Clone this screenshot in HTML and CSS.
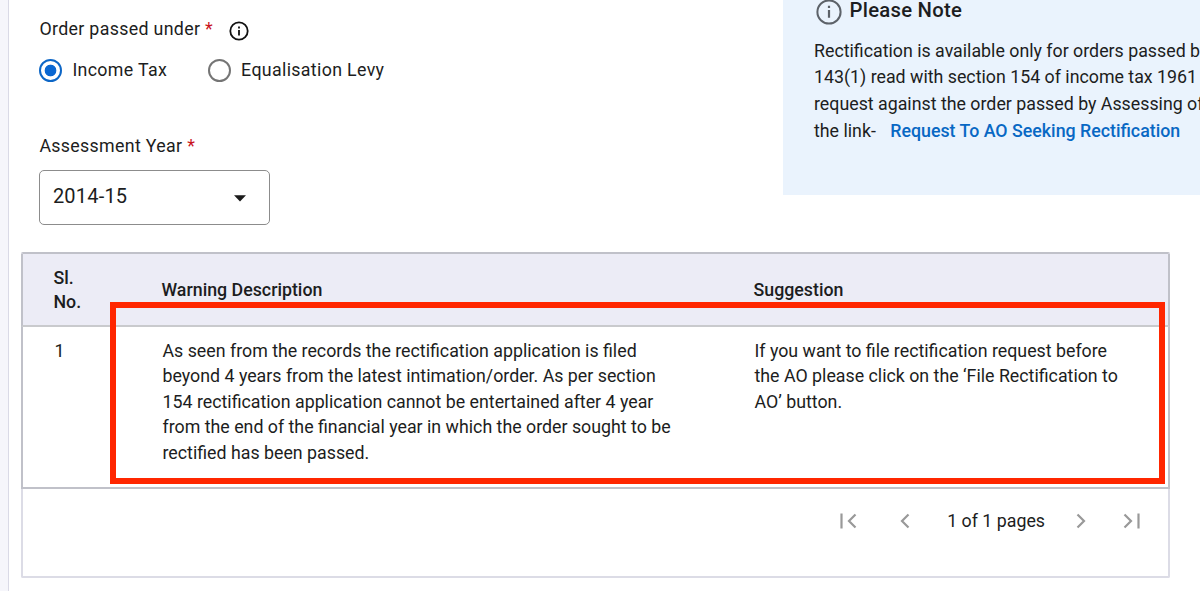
FILE: index.html
```
<!DOCTYPE html>
<html lang="en">
<head>
<meta charset="utf-8">
<title>Rectification request</title>
<link rel="stylesheet" href="styles.css">
</head>
<body>
<div class="page">
  <aside class="rail"></aside>
  <main class="main">
    <section class="top">
      <form class="filters">
        <div class="label order-label"><span>Order passed under <b class="req">*</b></span>
          <svg class="info" width="20" height="20" viewBox="0 0 20 20"><circle cx="10" cy="10" r="8.7" fill="none" stroke="#111" stroke-width="1.8"/><path d="M10 9v5.4M10 5.4v2" stroke="#111" stroke-width="1.8"/></svg>
        </div>
        <div class="radios">
          <label class="radio"><span class="dot checked"></span><span>Income Tax</span></label>
          <label class="radio"><span class="dot"></span><span>Equalisation Levy</span></label>
        </div>
        <div class="label year-label"><span>Assessment Year <b class="req">*</b></span></div>
        <div class="select"><span>2014-15</span><svg width="12" height="7" viewBox="0 0 12 7"><path d="M0 .2h12L6 6.6z" fill="#1a1a1a"/></svg></div>
      </form>
      <aside class="note">
        <h2 class="note-title"><svg width="26" height="26" viewBox="0 0 26 26"><circle cx="13" cy="13" r="11.6" fill="none" stroke="#5d6269" stroke-width="2"/><path d="M13 11v7.8M13 6.8v2.3" stroke="#5d6269" stroke-width="2.2"/></svg><span>Please Note</span></h2>
        <p class="note-text">Rectification is available only for orders passed by<br>143(1) read with section 154 of income tax 1961<br>request against the order passed by Assessing of<br>the link- <a class="link">Request To AO Seeking Rectification</a></p>
      </aside>
    </section>
    <section class="table">
      <div class="row head">
        <div class="serial">Sl.<br>No.</div><div>Warning Description</div><div>Suggestion</div>
      </div>
      <div class="row body">
        <div>1</div>
        <div>As seen from the records the rectification application is filed<br>beyond 4 years from the latest intimation/order. As per section<br>154 rectification application cannot be entertained after 4 year<br>from the end of the financial year in which the order sought to be<br>rectified has been passed.</div>
        <div>If you want to file rectification request before<br>the AO please click on the ‘File Rectification to<br>AO’ button.</div>
      </div>
      <div class="highlight"></div>
      <nav class="pager">
        <svg class="first" width="17" height="16" viewBox="0 0 17 16"><path d="M1.5.5v15M15.5 1.5L9 8l6.5 6.5"/></svg>
        <svg class="prev" width="10" height="16" viewBox="0 0 10 16"><path d="M8.5 1.5L2 8l6.5 6.5"/></svg>
        <span class="count">1 of 1 pages</span>
        <svg class="next" width="10" height="16" viewBox="0 0 10 16"><path d="M1.5 1.5L8 8l-6.5 6.5"/></svg>
        <svg class="last" width="17" height="16" viewBox="0 0 17 16"><path d="M15.5.5v15M1.5 1.5L8 8l-6.5 6.5"/></svg>
      </nav>
    </section>
  </main>
</div>
</body>
</html>
```
FILE: styles.css
```
* { box-sizing: border-box; }
body { margin: 0; overflow: hidden; background: #fff; color: #1c1d21; font-family: Roboto, "Liberation Sans", sans-serif; font-size: 17.8px; }
svg { display: block; flex: none; }
.page { display: flex; width: 1200px; height: 591px; overflow: hidden; }
.rail { flex: none; width: 9px; background: #f6f6fb; border-right: 1px solid #dadae6; }
.main { flex: none; width: 1191px; }
.top { display: flex; justify-content: space-between; height: 252px; }
.filters { padding: 17px 0 0 30.4px; }
.label { display: flex; align-items: center; height: 22px; letter-spacing: .33px; white-space: nowrap; }
.req { color: #c9141d; font-weight: 400; }
.info { margin: 5px 0 0 16px; }
.radios { display: flex; gap: 41px; margin-top: 19px; height: 24px; }
.radio { display: flex; align-items: center; gap: 10px; letter-spacing: .34px; white-space: nowrap; }
.radio span:last-child { margin-top: -1px; }
.dot { width: 23px; height: 23px; border: 2px solid #757575; border-radius: 50%; }
.dot.checked { border-color: #0d66c6; background: radial-gradient(circle, #0a67d2 5.5px, #fff 6.2px); }
.year-label { margin-top: 52px; }
.select { display: flex; align-items: center; justify-content: space-between; width: 231px; height: 55px; margin-top: 14px; padding: 0 23px 3px 12.5px; border: 1px solid #8c8c8c; border-radius: 5px; font-size: 20px; letter-spacing: .2px; }
.select svg { margin-top: 5px; }
.note { width: 417px; height: 195px; padding-left: 31px; background: #eaf3fd; overflow: hidden; white-space: nowrap; }
.note-title { display: flex; align-items: center; gap: 7.5px; height: 26px; margin: -1px 0 0 2px; font-size: 20.3px; font-weight: 500; letter-spacing: .26px; }
.note-title span { margin-top: -5px; }
.note-text { margin: 12.6px 0 0; line-height: 26.8px; }
.link { margin-left: 10px; color: #0868c4; font-weight: 500; }
.table { position: relative; width: 1149px; height: 326px; margin-left: 12px; border: 2px solid #dcdce6; border-top-color: #c0c1c9; border-radius: 2px; }
.row { display: grid; grid-template-columns: 108px 592px 1fr; padding-left: 30.5px; margin: 0 -2px; border: solid #c0c1c9; border-width: 0 2px; white-space: nowrap; }
.head { align-items: center; height: 73px; background: #ececf6; border-bottom: 2px solid #c9cacd; font-weight: 500; line-height: 24px; }
.body { height: 162px; padding: 11px 0 0 31.5px; border-bottom-width: 2px; line-height: 25.4px; }
.highlight { position: absolute; left: 87px; top: 48px; width: 1055px; height: 182px; border: 6px solid #ff2600; }
.pager { display: flex; align-items: center; justify-content: flex-end; height: 63px; padding-right: 28px; }
.pager path { fill: none; stroke: #999; stroke-width: 2.2; }
.prev { margin: 0 37px 0 43px; }
.next { margin: 0 37px 0 31px; }
```
